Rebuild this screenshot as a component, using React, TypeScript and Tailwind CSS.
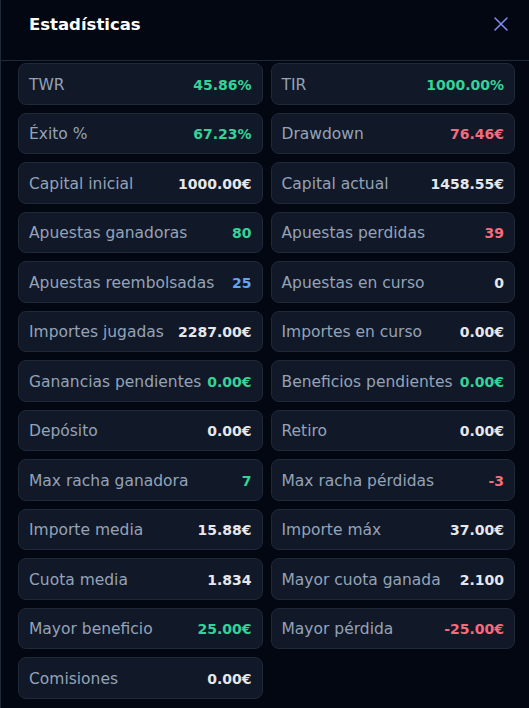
import React from "react";

type Tone = "green" | "red" | "blue" | "white";

interface Stat {
  label: string;
  value: string;
  tone: Tone;
}

const toneClass: Record<Tone, string> = {
  green: "text-[#34d399]",
  red: "text-[#f66a7d]",
  blue: "text-[#60a5fa]",
  white: "text-[#e5e7eb]",
};

const stats: Stat[] = [
  { label: "TWR", value: "45.86%", tone: "green" },
  { label: "TIR", value: "1000.00%", tone: "green" },
  { label: "Éxito %", value: "67.23%", tone: "green" },
  { label: "Drawdown", value: "76.46€", tone: "red" },
  { label: "Capital inicial", value: "1000.00€", tone: "white" },
  { label: "Capital actual", value: "1458.55€", tone: "white" },
  { label: "Apuestas ganadoras", value: "80", tone: "green" },
  { label: "Apuestas perdidas", value: "39", tone: "red" },
  { label: "Apuestas reembolsadas", value: "25", tone: "blue" },
  { label: "Apuestas en curso", value: "0", tone: "white" },
  { label: "Importes jugadas", value: "2287.00€", tone: "white" },
  { label: "Importes en curso", value: "0.00€", tone: "white" },
  { label: "Ganancias pendientes", value: "0.00€", tone: "green" },
  { label: "Beneficios pendientes", value: "0.00€", tone: "green" },
  { label: "Depósito", value: "0.00€", tone: "white" },
  { label: "Retiro", value: "0.00€", tone: "white" },
  { label: "Max racha ganadora", value: "7", tone: "green" },
  { label: "Max racha pérdidas", value: "-3", tone: "red" },
  { label: "Importe media", value: "15.88€", tone: "white" },
  { label: "Importe máx", value: "37.00€", tone: "white" },
  { label: "Cuota media", value: "1.834", tone: "white" },
  { label: "Mayor cuota ganada", value: "2.100", tone: "white" },
  { label: "Mayor beneficio", value: "25.00€", tone: "green" },
  { label: "Mayor pérdida", value: "-25.00€", tone: "red" },
  { label: "Comisiones", value: "0.00€", tone: "white" },
];

function StatCard({ label, value, tone }: Stat) {
  return (
    <div className="h-[41.5px] flex items-center justify-between pt-[3px] px-[10px] rounded-lg bg-[#111827] border border-[#1f2937]">
      <span className="text-[15.5px] text-[#94a3b8] whitespace-nowrap">{label}</span>
      <span className={`text-[14px] font-bold whitespace-nowrap shrink-0 ${toneClass[tone]}`}>
        {value}
      </span>
    </div>
  );
}

export default function App() {
  return (
    <div className="w-[529px] h-[708px] overflow-hidden bg-[#030712] border-l border-[#1f2937] font-['DejaVu_Sans',sans-serif]">
      {/* Header */}
      <div className="h-[61px] flex items-start justify-between pt-[13px] pl-[28px] pr-[21px] border-b border-[#1f2937]">
        <h2 className="text-[16.5px] leading-[24px] font-bold text-white">Estadísticas</h2>
        <svg
          className="mt-[4px]"
          width="14"
          height="14"
          viewBox="0 0 14 14"
          fill="none"
          stroke="#818cf8"
          strokeWidth="1.5"
          strokeLinecap="round"
        >
          <path d="M1 1l12 12M13 1L1 13" />
        </svg>
      </div>

      {/* Grid */}
      <div className="grid grid-cols-2 gap-x-2 gap-y-2 pl-[17px] pr-[14px] pt-[2px]">
        {stats.map((s) => (
          <StatCard key={s.label} {...s} />
        ))}
      </div>
    </div>
  );
}
